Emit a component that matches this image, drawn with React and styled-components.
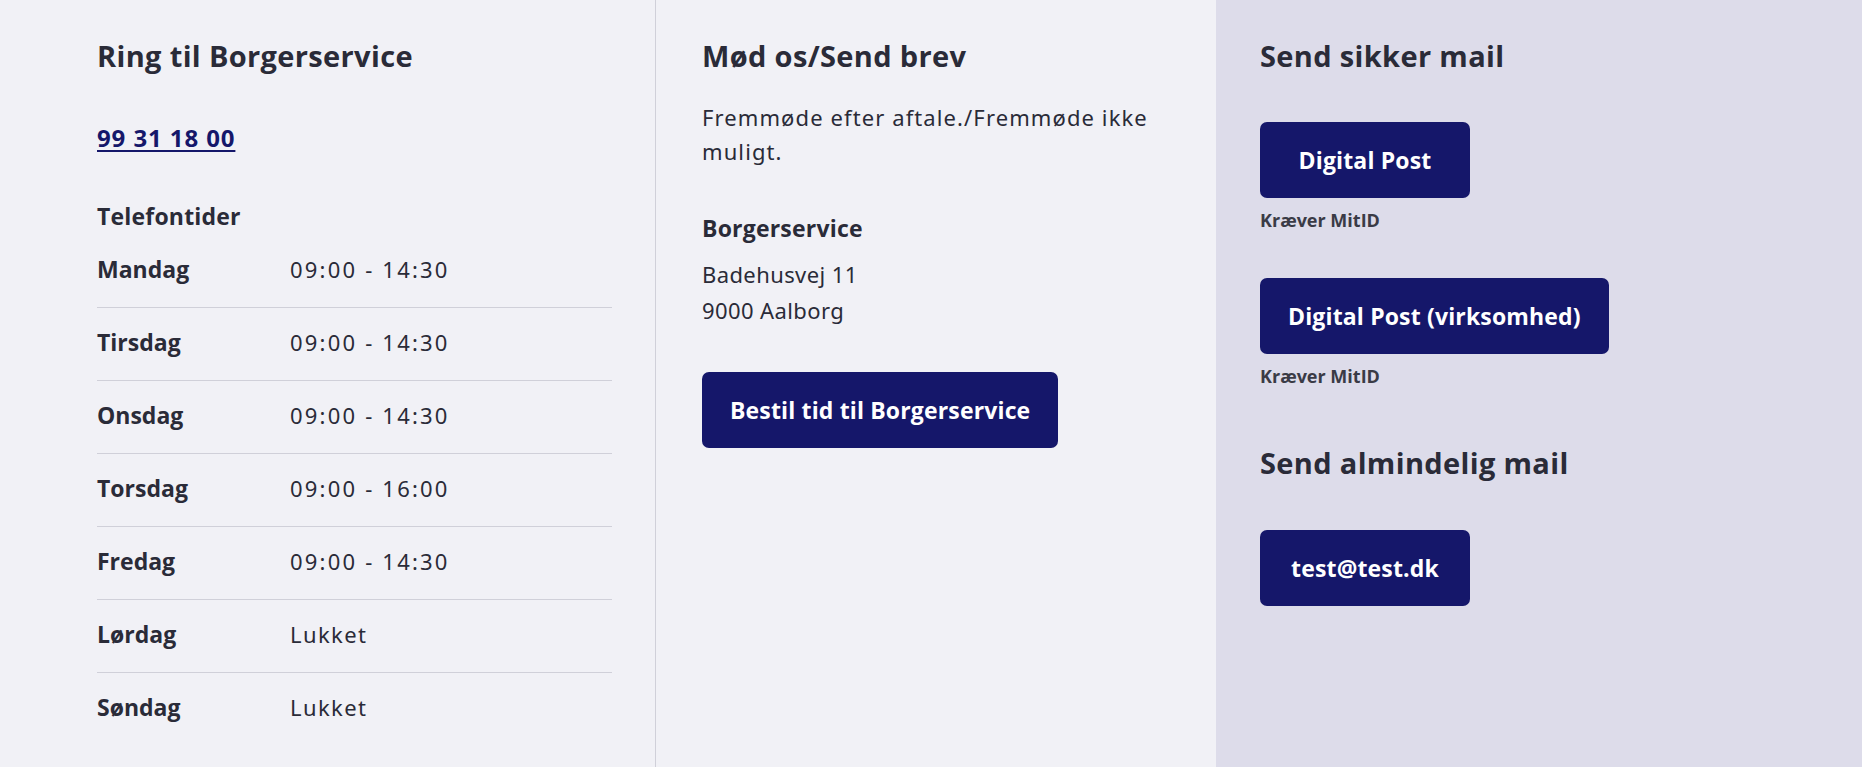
import React from 'react'
import styled, { createGlobalStyle } from 'styled-components'

const colors = {
    page: '#f1f1f6',
    aside: '#dddcea',
    line: '#d0d0d9',
    text: '#2a2b38',
    navy: '#15176a',
    white: '#ffffff',
}

const bold = `'Open Sans', 'Noto Sans', sans-serif`
const regular = `'Noto Sans', 'Open Sans', sans-serif`

const GlobalStyle = createGlobalStyle`
    html, body {
        margin: 0;
        padding: 0;
        background: ${colors.page};
    }
    body {
        font-family: ${regular};
        color: ${colors.text};
    }
`

const Contact = styled.section`
    display: grid;
    grid-template-columns: 656px 560px 1fr;
    min-height: 100vh;
`

const Column = styled.div`
    display: flex;
    flex-direction: column;
    align-items: flex-start;
    padding: 38px 44px 24px ${(p) => p.$left || 44}px;
    background: ${(p) => (p.$tinted ? colors.aside : colors.page)};
    border-right: ${(p) => (p.$ruled ? `1px solid ${colors.line}` : 'none')};
`

const Heading = styled.h2`
    margin: ${(p) => p.$top || 0}px 0 0;
    font-family: ${bold};
    font-size: 29px;
    font-weight: 700;
    line-height: 36px;
    letter-spacing: 0.35px;
`

const Phone = styled.a`
    margin-top: 48px;
    font-family: ${bold};
    font-size: 24px;
    font-weight: 700;
    line-height: 31px;
    letter-spacing: 0.9px;
    color: ${colors.navy};
    text-decoration: underline;
    text-decoration-thickness: 2px;
    text-underline-offset: 3px;
`

const SubHeading = styled.h3`
    margin: ${(p) => p.$top || 0}px 0 0;
    font-family: ${bold};
    font-size: 23px;
    font-weight: 700;
    line-height: 32px;
    letter-spacing: 0.2px;
`

const Hours = styled.dl`
    width: 515px;
    margin: 3px 0 0;
`

const Row = styled.div`
    display: grid;
    grid-template-columns: 193px 1fr;
    padding: 18px 0 22px;
    border-top: ${(p) => (p.$first ? 'none' : `1px solid ${colors.line}`)};
`

const Day = styled.dt`
    font-family: ${bold};
    font-size: 23px;
    font-weight: 700;
    line-height: 32px;
`

const Time = styled.dd`
    margin: 0;
    font-family: ${regular};
    font-size: 22px;
    line-height: 32px;
    letter-spacing: ${(p) => (p.$closed ? 1.4 : 2.2)}px;
`

const Text = styled.p`
    margin: ${(p) => p.$top || 0}px 0 0;
    font-family: ${regular};
    font-size: 22px;
    line-height: ${(p) => p.$lh || 34}px;
    letter-spacing: ${(p) => p.$ls ?? 1.1}px;
`

const Button = styled.a`
    display: inline-flex;
    align-items: center;
    justify-content: center;
    box-sizing: border-box;
    min-width: 210px;
    height: 76px;
    margin-top: ${(p) => p.$top || 0}px;
    padding: 0 28px;
    border-radius: 7px;
    background: ${colors.navy};
    color: ${colors.white};
    font-family: ${bold};
    font-size: 23px;
    font-weight: 700;
    letter-spacing: 0.15px;
    text-decoration: none;
`

const Note = styled.span`
    margin-top: 10px;
    font-family: ${bold};
    font-size: 18px;
    font-weight: 700;
    line-height: 24px;
    color: #3a3b46;
`

const hours = [
    ['Mandag', '09:00 - 14:30'],
    ['Tirsdag', '09:00 - 14:30'],
    ['Onsdag', '09:00 - 14:30'],
    ['Torsdag', '09:00 - 16:00'],
    ['Fredag', '09:00 - 14:30'],
    ['Lørdag', 'Lukket'],
    ['Søndag', 'Lukket'],
]

function App() {
    return (
        <>
            <GlobalStyle />
            <Contact>
                <Column $left={97} $ruled>
                    <Heading>Ring til Borgerservice</Heading>
                    <Phone href="#">99 31 18 00</Phone>
                    <SubHeading $top={47}>Telefontider</SubHeading>
                    <Hours>
                        {hours.map(([day, time], i) => (
                            <Row key={day} $first={i === 0}>
                                <Day>{day}</Day>
                                <Time $closed={time === 'Lukket'}>{time}</Time>
                            </Row>
                        ))}
                    </Hours>
                </Column>

                <Column $left={46}>
                    <Heading>Mød os/Send brev</Heading>
                    <Text $top={26}>Fremmøde efter aftale./Fremmøde ikke muligt.</Text>
                    <SubHeading $top={44}>Borgerservice</SubHeading>
                    <Text $top={12} $lh={36} $ls={0.4}>
                        Badehusvej 11
                        <br />
                        9000 Aalborg
                    </Text>
                    <Button href="#" $top={44}>Bestil tid til Borgerservice</Button>
                </Column>

                <Column $tinted>
                    <Heading>Send sikker mail</Heading>
                    <Button href="#" $top={48}>Digital Post</Button>
                    <Note>Kræver MitID</Note>
                    <Button href="#" $top={46}>Digital Post (virksomhed)</Button>
                    <Note>Kræver MitID</Note>
                    <Heading $top={57}>Send almindelig mail</Heading>
                    <Button href="#" $top={49}>test@test.dk</Button>
                </Column>
            </Contact>
        </>
    )
}

export default App
